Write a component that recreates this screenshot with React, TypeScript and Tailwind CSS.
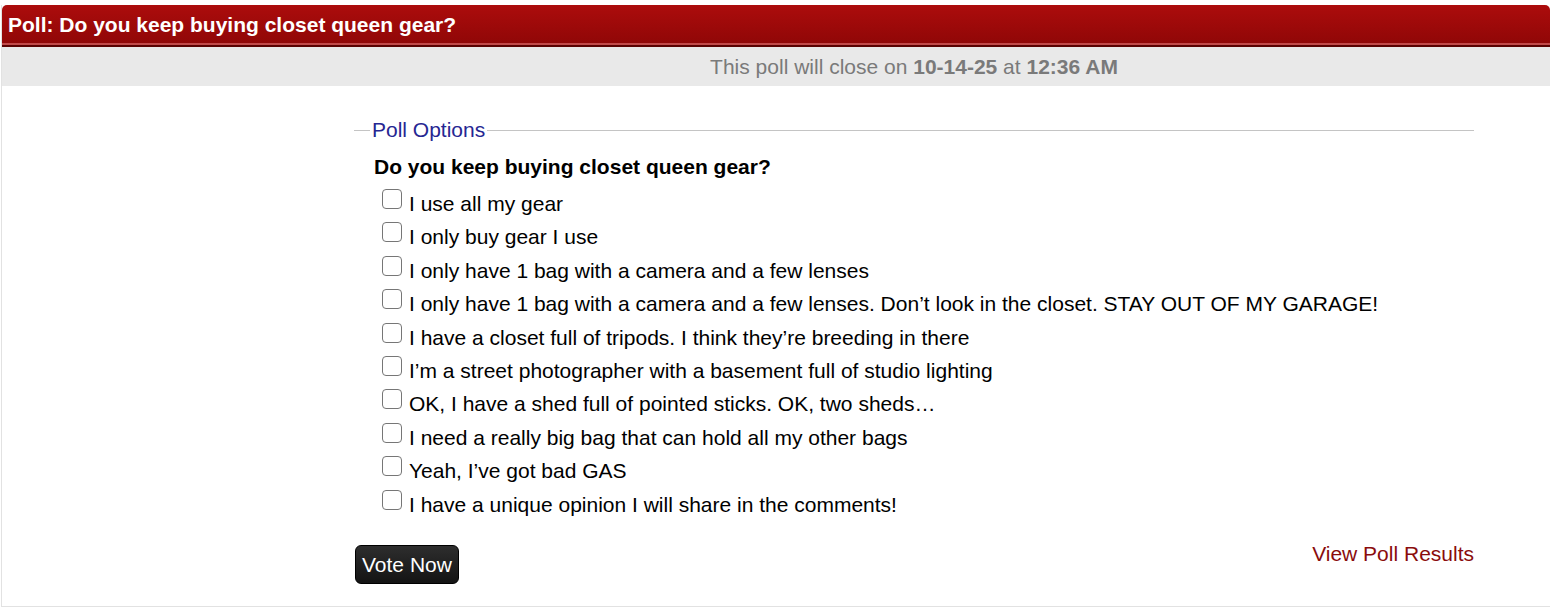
const OPTIONS = [
  "I use all my gear",
  "I only buy gear I use",
  "I only have 1 bag with a camera and a few lenses",
  "I only have 1 bag with a camera and a few lenses. Don\u2019t look in the closet. STAY OUT OF MY GARAGE!",
  "I have a closet full of tripods. I think they\u2019re breeding in there",
  "I\u2019m a street photographer with a basement full of studio lighting",
  "OK, I have a shed full of pointed sticks. OK, two sheds\u2026",
  "I need a really big bag that can hold all my other bags",
  "Yeah, I\u2019ve got bad GAS",
  "I have a unique opinion I will share in the comments!",
];

export default function App() {
  return (
    <div className="w-[1550px] h-[612px] bg-white font-['Liberation_Sans',Arial,sans-serif] pt-[5px] overflow-hidden">
      <div className="ml-[1px] border-l border-[#e2e2e2] border-b h-[602px] flex flex-col">
        {/* Header */}
        <div className="h-[42px] rounded-t-[5px] bg-gradient-to-b from-[#ac0c0c] to-[#8f0707] border-b-2 border-[#5a0202] shadow-[inset_0_-2px_0_#c14a4a] flex items-center px-[6px]">
          <h2 className="text-white font-bold text-[21px] leading-none -mt-[2px]">Poll: Do you keep buying closet queen gear?</h2>
        </div>

        {/* Close time */}
        <div className="h-[39px] bg-[#e9e9e9] flex items-center justify-center pl-[276px] text-[21px] text-[#7a7a7a]">
          <span>
            This poll will close on <b>10-14-25</b> at <b>12:36 AM</b>
          </span>
        </div>

        {/* Content */}
        <div className="pl-[352px] pr-[76px] pt-[31px]">
          <fieldset className="border-t border-[#c4c4c4] pl-[20px]">
            <legend className="px-[2px] -ml-[4px] text-[21px] text-[#262692] leading-[26px]">Poll Options</legend>
            <div className="font-bold text-[21px] text-black mt-[12px] leading-[24px]">Do you keep buying closet queen gear?</div>
            <ul className="mt-[9px] pl-[8px]">
              {OPTIONS.map((opt) => (
                <li key={opt} className="h-[33.4px] flex items-start">
                  <span className="w-[20px] h-[20px] border border-[#767676] rounded-[4px] bg-white shrink-0 mt-[1px]" />
                  <span className="ml-[7px] mt-[4px] text-[21px] text-black leading-[24px]">{opt}</span>
                </li>
              ))}
            </ul>
          </fieldset>

          <div className="flex items-start justify-between mt-[23px] ml-[1px]">
            <button className="h-[39px] px-[6px] rounded-[6px] bg-gradient-to-b from-[#2e2e2e] to-[#141414] border border-[#000] text-white text-[21px] leading-none">
              Vote Now
            </button>
            <a className="text-[21px] text-[#8a0c0c] leading-[24px] -mt-[3px] cursor-pointer">View Poll Results</a>
          </div>
        </div>
      </div>
    </div>
  );
}
